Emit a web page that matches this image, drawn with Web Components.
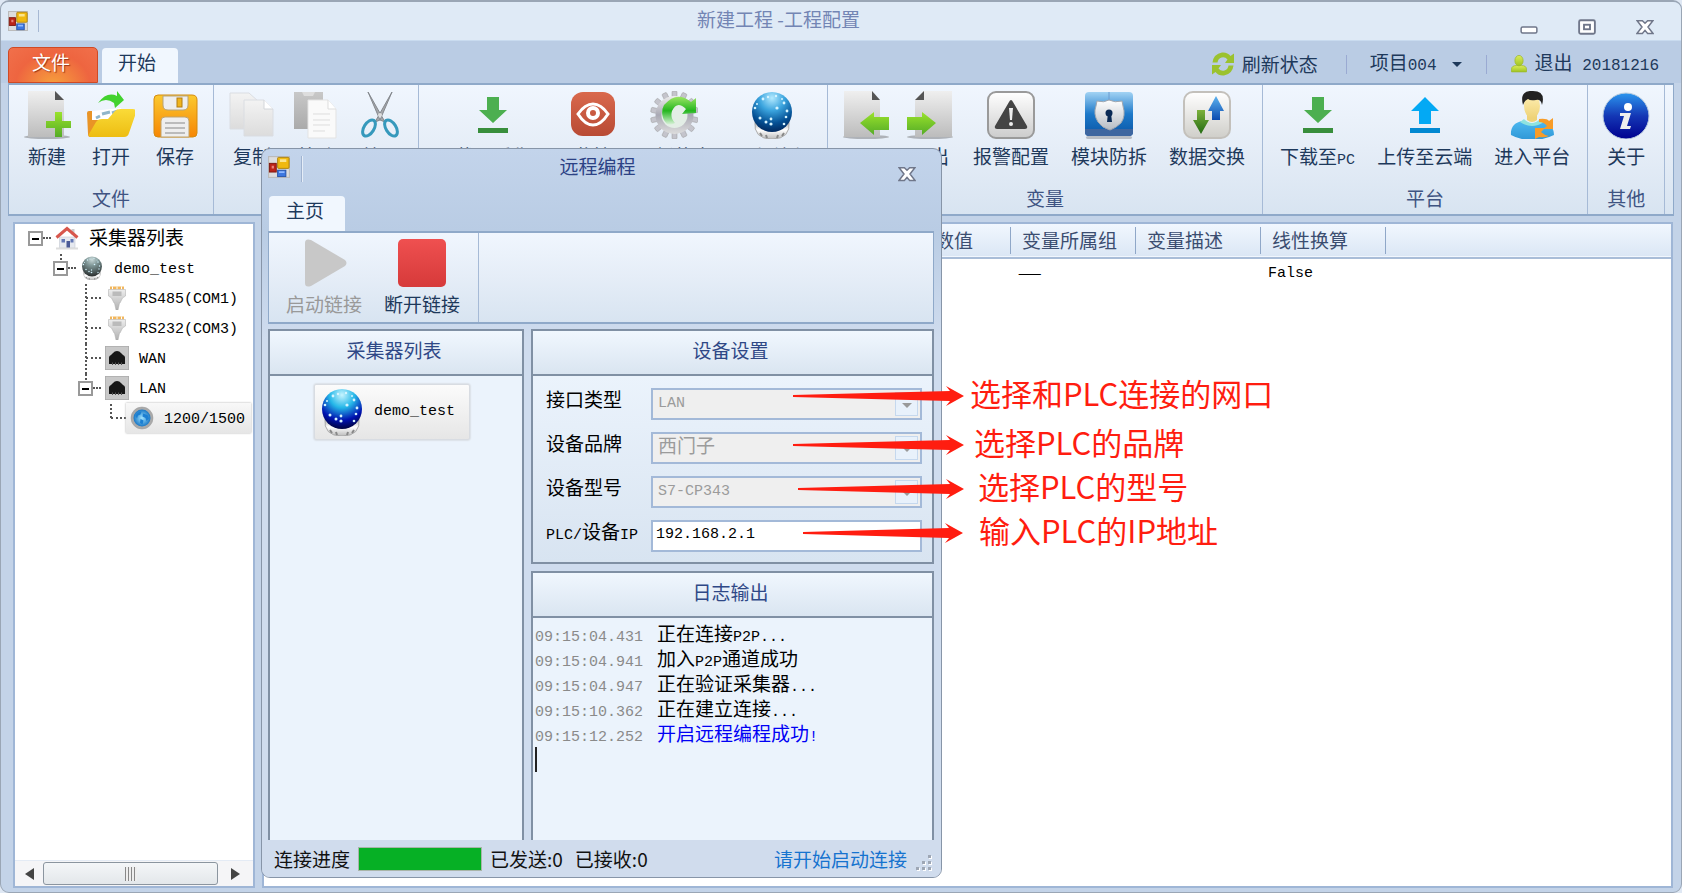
<!DOCTYPE html>
<html lang="zh-CN">
<head>
<meta charset="utf-8">
<title>新建工程 -工程配置</title>
<style>
    html, body { height: 100%; }
    body {
        margin: 0;
        overflow: hidden;
        background: #dfe8f4;
        font: 19px/24px "Noto Sans CJK SC", sans-serif;
        color: #1e395b;
    }
</style>
</head>
<body>
<main-window>
    <tab-bar slot="tabs"></tab-bar>
    <ribbon-panel slot="ribbon">
        <ribbon-group caption="文件">
            <ribbon-button icon="new" label="新建"></ribbon-button>
            <ribbon-button icon="open" label="打开"></ribbon-button>
            <ribbon-button icon="save" label="保存"></ribbon-button>
        </ribbon-group>
        <ribbon-group caption="编辑">
            <ribbon-button icon="copy" label="复制"></ribbon-button>
            <ribbon-button icon="paste" label="粘贴"></ribbon-button>
            <ribbon-button icon="cut" label="剪切"></ribbon-button>
        </ribbon-group>
        <ribbon-group caption="采集器">
            <ribbon-button icon="download" label="下载至采集器"></ribbon-button>
            <ribbon-button icon="eye" label="监控"></ribbon-button>
            <ribbon-button icon="gear" label="更新状态"></ribbon-button>
            <ribbon-button icon="globe" label="远程编程"></ribbon-button>
        </ribbon-group>
        <ribbon-group caption="变量">
            <ribbon-button icon="import" label="导入"></ribbon-button>
            <ribbon-button icon="export" label="导出"></ribbon-button>
            <ribbon-button icon="alarm" label="报警配置"></ribbon-button>
            <ribbon-button icon="shield" label="模块防拆"></ribbon-button>
            <ribbon-button icon="exchange" label="数据交换"></ribbon-button>
        </ribbon-group>
        <ribbon-group caption="平台">
            <ribbon-button icon="download" label="下载至PC"></ribbon-button>
            <ribbon-button icon="upload" label="上传至云端"></ribbon-button>
            <ribbon-button icon="person" label="进入平台"></ribbon-button>
        </ribbon-group>
        <ribbon-group caption="其他">
            <ribbon-button icon="about" label="关于"></ribbon-button>
        </ribbon-group>
    </ribbon-panel>
    <device-tree slot="side">
        <tree-node icon="home" label="采集器列表" open>
            <tree-node icon="device" label="demo_test" open>
                <tree-node icon="serial" label="RS485(COM1)"></tree-node>
                <tree-node icon="serial" label="RS232(COM3)"></tree-node>
                <tree-node icon="port" label="WAN"></tree-node>
                <tree-node icon="port" label="LAN" open>
                    <tree-node icon="disc" label="1200/1500" selected></tree-node>
                </tree-node>
            </tree-node>
        </tree-node>
    </device-tree>
    <variable-table slot="content"></variable-table>
</main-window>

<remote-dialog caption="远程编程">
    <device-list slot="list"></device-list>
    <device-form slot="form"></device-form>
    <log-output slot="log"></log-output>
</remote-dialog>

<hint-arrow length="171" style="left: 793px; top: 372px; gap: 6px">选择和PLC连接的网口</hint-arrow>
<hint-arrow length="171" style="left: 793px; top: 421px; gap: 10px">选择PLC的品牌</hint-arrow>
<hint-arrow length="166" style="left: 798px; top: 465px; gap: 14px">选择PLC的型号</hint-arrow>
<hint-arrow length="160" style="left: 803px; top: 509px; gap: 16px">输入PLC的IP地址</hint-arrow>

<script>
const gradient = (id, ...colors) => `
    <linearGradient id="${id}" x1="0" y1="0" x2="0" y2="1">
        ${colors.map((c, i) => `<stop offset="${i / (colors.length - 1)}" stop-color="${c}"/>`).join('')}
    </linearGradient>`;

const ball = (a, b, c, d) => `
    <defs>
        <radialGradient id="ball" cx=".5" cy=".15" r=".9">
            <stop offset="0" stop-color="${a}"/><stop offset=".35" stop-color="${b}"/>
            <stop offset=".7" stop-color="${c}"/><stop offset="1" stop-color="${d}"/>
        </radialGradient>
        ${gradient('base', '#999', '#fff', '#bbb')}
    </defs>
    <path d="M7 30 Q5 48 24 48 T41 30Z" fill="url(#base)" stroke="#aaa"/>
    <path d="M12 42l2 3M18 44l1 3M30 44l-1 3M36 42l-2 3" stroke="#888" stroke-width="2"/>
    <circle cx="24" cy="21" r="20" fill="url(#ball)"/>
    <g fill="#d5f4ff">
        <circle cx="15" cy="8" r="1.4"/><circle cx="20" cy="6" r="1.2"/><circle cx="28" cy="5" r="1.2"/>
        <circle cx="36" cy="12" r="1.4"/><circle cx="29" cy="17" r="1.6"/><circle cx="39" cy="20" r="1.4"/>
        <circle cx="7" cy="17" r="1.3"/><circle cx="12" cy="27" r="1.5"/><circle cx="18" cy="31" r="1.5"/>
        <circle cx="23" cy="28" r="1.4"/><circle cx="23" cy="33" r="1.6"/><circle cx="38" cy="26" r="1.3"/>
        <circle cx="36" cy="33" r="1.3"/><circle cx="9" cy="13" r="1"/><circle cx="34" cy="8" r="1"/>
    </g>`;

const page = `
    <defs>${gradient('page', '#efefef', '#bcbcbc')}${gradient('green', '#9ae22c', '#55ac27')}</defs>
    <ellipse cx="24" cy="46" rx="23" ry="2" fill="#aeb2b8"/>`;

const gearTeeth = Array.from({ length: 14 }, (v, i) =>
    `<rect x="22" y="0" width="5" height="10" rx="1" transform="rotate(${i * 360 / 14} 24.5 24)"/>`).join('');

const icons = {
    new: `${page}<path d="M5 0h27l9 9v37H5z" fill="url(#page)"/><path d="M32 0v9h9z" fill="#555"/>
        <path d="M32 21h7v9h9v7h-9v9h-7v-9h-9v-7h9z" fill="url(#green)"/>`,
    import: `${page}<path d="M2 0h28l8 9v37H2z" fill="url(#page)"/><path d="M30 0v9h8z" fill="#555"/>
        <path d="M18 32l14-11v5h15v13H32v5z" fill="url(#green)"/>`,
    export: `${page}<path d="M9 9l8-9h29v46H9z" fill="url(#page)"/><path d="M18 0v9h-9z" fill="#555"/>
        <path d="M30 32L16 21v5H1v13h15v5z" fill="url(#green)"/>`,
    open: `<defs>${gradient('fold', '#fadb38', '#edbd12')}</defs>
        <path d="M0 22q0-2 2-2h9v26H3q-2 0-2-3z" fill="#e99426"/>
        <path d="M5 20l29-3 3 12H5z" fill="#fff"/>
        <path d="M9 27l4-2M15 23l8-2M25 22l6-2" stroke="#91b6c9" stroke-width="3"/>
        <path d="M9 31Q11 28 15 28h6l7-8q2-2 5-2h13q4 0 3 4l-7 20q-1 4-5 4H4q-3 0-2-3z" fill="url(#fold)"/>
        <path d="M11 12Q20 0 30 5V0l7 9-9 8-1-5Q19 6 11 12z" fill="#42d22e"/>`,
    save: `<defs>${gradient('disk', '#fbc92e', '#f68605')}</defs>
        <path d="M3 8q0-4 4-4h34q5 0 5 5v33q0 4-4 4H7q-4 0-4-4z" fill="url(#disk)" stroke="#d58b0f"/>
        <path d="M12 5h25v9q0 5-5 5H17q-5 0-5-5z" fill="#eee" stroke="#b7a377"/>
        <rect x="26" y="7" width="5" height="9" fill="#f0b41c" stroke="#b27c11"/>
        <path d="M10 46V30q0-4 4-4h20q4 0 4 4v16z" fill="#eee" stroke="#bfa36d"/>
        <path d="M14 32h20M14 37h20M14 42h20" stroke="#bbb" stroke-width="2"/>`,
    copy: `<defs>${gradient('grey', '#f3f3f3', '#dcdcdc')}</defs>
        <g fill="url(#grey)" stroke="#dadde2"><path d="M2 2h19l9 8v28H2z"/><path d="M16 9h20l9 9v27H16z"/></g>
        <path d="M36 9v9h9" fill="#fff" stroke="#d3d6da"/>`,
    paste: `<defs>${gradient('board', '#c8c8c8', '#aaa')}</defs>
        <path d="M2 1h29v37H2z" fill="url(#board)"/><path d="M10 1h13l-2 4H12z" fill="#ddd"/>
        <path d="M16 9h20l8 9v29H16z" fill="#fafafa" stroke="#e3e3e3"/><path d="M36 9v9h8" fill="#fff" stroke="#ddd"/>
        <path d="M21 23h17M21 29h17M21 34h17M21 40h12" stroke="#ddd"/>`,
    cut: `<path d="M12 1L29 31l-5-2zM36 1L19 31l5-2z" fill="#a4a6aa" stroke="#85898e"/>
        <g fill="none" stroke="#3699bc" stroke-width="3"><ellipse cx="13" cy="37" rx="5" ry="9" transform="rotate(32 13 37)"/>
        <ellipse cx="35" cy="37" rx="5" ry="9" transform="rotate(-32 35 37)"/></g><circle cx="24" cy="24" r="2" fill="#ddd"/>`,
    download: `<path d="M18 6h12v13h8L24 32 10 19h8z" fill="#4caf50"/><path d="M9 37h30v5H9z" fill="#388e3c"/>`,
    upload: `<path d="M18 33h12V20h8L24 6 10 20h8z" fill="#03a9f4"/><path d="M9 37h30v5H9z" fill="#0288d1"/>`,
    eye: `<defs>${gradient('red', '#d9694d', '#b84a34')}</defs><rect x="2" y="1" width="44" height="44" rx="12" fill="url(#red)"/>
        <path d="M9 23Q16 13 24 13T39 23Q32 34 24 34T9 23z" fill="none" stroke="#fff" stroke-width="3"/>
        <circle cx="24" cy="22" r="5" fill="none" stroke="#fff" stroke-width="4"/>`,
    gear: `<defs>${gradient('metal', '#eee', '#a9a9b4', '#ddd')}${gradient('arrow', '#9be564', '#24b61e', '#ddf3de')}</defs>
        <g fill="#c4c4cc" stroke="#999" stroke-width=".5">${gearTeeth}</g>
        <circle cx="24.5" cy="24" r="19" fill="url(#metal)"/><circle cx="24.5" cy="24" r="13" fill="#e3eee6"/>
        <path d="M17 33A16 16 0 0 1 14 14Q27-1 41 11l5-4v15l-14 1 4-5Q27 9 22 20q-2 7 3 12-4 3-8 1z" fill="url(#arrow)"/>`,
    globe: ball('#b3eaff', '#3ba4de', '#045094', '#012153'),
    ball: ball('#c6f4ff', '#25b7e8', '#0012b0', '#000026'),
    device: ball('#c8d8d8', '#7e9595', '#4c5a5a', '#222'),
    alarm: `<defs>${gradient('tile', '#fff', '#ccc')}</defs><rect x="1" y="1" width="46" height="46" rx="8" fill="url(#tile)" stroke="#9a9a9a" stroke-width="2"/>
        <path d="M24 9q1 0 2 2l14 24q1 3-2 3H10q-3 0-2-3L22 11q1-2 2-2z" fill="#444"/>
        <path d="M22 17h4l-1 12h-2z" fill="#eee"/><circle cx="24" cy="33" r="2" fill="#eee"/>`,
    shield: `<defs>${gradient('blue', '#a2d3f4', '#1d79c9', '#0a56a6')}${gradient('plate', '#fff', '#b5bcc4')}</defs>
        <rect x="1" y="45" width="46" height="3" rx="2" fill="#b8bdc5"/>
        <rect x="0" y="1" width="48" height="44" rx="4" fill="url(#blue)"/><path d="M0 38h48v3q0 4-4 4H4q-4 0-4-4z" fill="#3e66a0"/>
        <path d="M24 1v8" stroke="#6a9bd0"/>
        <path d="M12 10q7 2 12-1 6 3 13 1l1 5q3 10-2 17-5 5-11 7-8-2-12-8-5-8-2-16z" fill="url(#plate)" stroke="#a2a8b0"/>
        <circle cx="24" cy="22" r="3.5" fill="#0a2a55"/><path d="M23 22h3l1 9h-5z" fill="#0a2a55"/>`,
    exchange: `<defs>${gradient('tile', '#fff', '#cfcec9')}${gradient('up', '#5db3ef', '#0b4bb0')}${gradient('down', '#7db13d', '#236b12')}</defs>
        <rect x="1" y="1" width="46" height="46" rx="9" fill="url(#tile)" stroke="#c3c0bb" stroke-width="2"/>
        <path d="M33 5l8 15h-4v9h-8v-9h-4z" fill="url(#up)"/><path d="M18 43l8-14h-4V19h-8v10h-4z" fill="url(#down)"/>`,
    person: `<defs>${gradient('skin', '#fff0b5', '#eed277')}${gradient('shirt', '#4db8f0', '#2f97d6')}</defs>
        <path d="M3 44q-1-12 12-14l9 3 9-3q13 3 13 14-10 5-22 5T3 44z" fill="url(#shirt)"/>
        <path d="M16 28q8 8 16 0l4 3q-12 8-24 0z" fill="#8fe3df"/>
        <path d="M19 22h10v7q-5 4-10 0z" fill="#eed277"/><ellipse cx="24" cy="15" rx="8" ry="12" fill="url(#skin)"/>
        <path d="M15 14Q11-1 25 0q13 0 9 14-1-6-6-5-6 1-8-1-4 2-5 6z" fill="#222"/>
        <path d="M31 28q8-1 10 2l4-3v11H35l4-3q-3-4-8-4zM41 45q-5 2-10 1l-4 2V37h10l-4 4q3 3 8 4z" fill="#f79c28"/>`,
    about: `<defs>${gradient('info', '#2b96ee', '#1437b5', '#00008f')}</defs><circle cx="24" cy="25" r="23" fill="url(#info)" stroke="#bcd"/>
        <circle cx="26" cy="16" r="4" fill="#fff"/><path d="M18 22h11l-4 13h4l-1 3H18l4-13h-4z" fill="#eee"/>`,
    play: `<path d="M5 4q0-5 6-3l34 20q3 3 0 6L11 47q-6 2-6-3z" fill="#c8c8c8"/>`,
    stop: `<defs>${gradient('stop', '#ef5050', '#d63a3a')}</defs><rect width="48" height="48" rx="5" fill="url(#stop)"/>`,
    home: `<path d="M9 22h31v22H9z" fill="#e6e9ef" stroke="#b9bfc9"/><path d="M33 6h6v12h-6z" fill="#ccc"/>
        <path d="M3 23L24 5l21 18" fill="none" stroke="#d8574d" stroke-width="6"/>
        <path d="M13 26h7v7h-7zM31 26h6v7h-6z" fill="#6478b5"/><path d="M23 30h7v14h-7z" fill="#4a5a96"/><path d="M2 45h44" stroke="#ddd" stroke-width="4"/>`,
    serial: `<defs>${gradient('plug', '#eee', '#b0b0b0')}</defs><path d="M10 1h28v6H10z" fill="#f2b65b"/><path d="M15 1v6M24 1v6M33 1v6" stroke="#fff" stroke-width="2"/>
        <path d="M7 7h34v13l-6 4-5 10h-1l-3 14h-4l-3-14h-1l-5-10-6-4z" fill="url(#plug)" stroke="#aaa"/><path d="M15 11h18v9H15z" fill="#bbb"/>`,
    port: `<rect width="48" height="48" fill="#c8c8c8" stroke="#aaa" stroke-width="3"/><path d="M8 36V23q0-4 4-5l4-4q3-4 8-4t8 4l4 4q4 1 4 5v13z" fill="#161616"/>
        <path d="M15 33v5M21 33v5M27 33v5M33 33v5" stroke="#555" stroke-width="2"/>`,
    disc: `<defs><radialGradient id="sea"><stop offset="0" stop-color="#9fe3ff"/><stop offset="1" stop-color="#1877c6"/></radialGradient></defs>
        <circle cx="24" cy="24" r="22" fill="#aaa" stroke="#999"/><circle cx="24" cy="24" r="17" fill="url(#sea)"/>
        <path d="M11 20q3-9 12-9l-2 6-5 2-2 6zM26 15l9 3 3 7-5 5-2-6-6-3z" fill="#1c7fd2"/><path d="M21 26l6 3-2 8-5-3z" fill="#1c7fd2"/>`,
    app: `<rect x="1" y="1" width="46" height="46" fill="#ddd" stroke="#bbb" stroke-width="3"/>
        <rect x="21" y="3" width="25" height="24" rx="2" fill="#f0b90f" stroke="#a97e0b" stroke-width="2"/><path d="M26 7h14v6H26z" fill="#fbe58c"/>
        <rect x="3" y="16" width="15" height="19" fill="#bb2418" stroke="#7b150d" stroke-width="2"/><path d="M8 21h5v6H8z" fill="#e98378"/>
        <rect x="21" y="31" width="18" height="14" fill="#3c77e0" stroke="#2350a5" stroke-width="2"/><path d="M24 33h12v4H24z" fill="#8fb8ff"/>`,
    refresh: `<g fill="#9bc22f"><path d="M3 21Q5 4 22 1q11-1 17 7l7-5v19H28l5-7q-5-6-12-4-7 2-8 10z"/>
        <path d="M45 27q-2 17-19 20-11 1-17-7l-7 5V26h18l-5 7q5 6 12 4 7-2 8-10z"/></g>`,
    user: `<defs>${gradient('lime', '#dcec5a', '#9fc423')}</defs><g fill="url(#lime)" stroke="#9db82f" stroke-width="2">
        <path d="M4 45V38q0-10 14-10h12q14 0 14 10v7z"/><ellipse cx="24" cy="15" rx="11" ry="14"/></g>`,
    min: `<rect x="3" y="24" width="42" height="16" rx="4" fill="#fff" stroke="#70778a" stroke-width="4"/>`,
    max: `<rect x="3" y="6" width="42" height="36" rx="4" fill="#fff" stroke="#70778a" stroke-width="5"/><rect x="16" y="18" width="16" height="12" fill="#fff" stroke="#70778a" stroke-width="5"/>`,
    close: `<path d="M3 7h14l7 7 7-7h14L32 24l13 17H31l-7-8-7 8H3l13-17z" fill="#fff" stroke="#70778a" stroke-width="4"/>`
};

// Latin letters and digits are set in the narrow terminal face, half the width of a Han character
const mixed = text => text.replace(/[\x20-\x7e]+/g, run => `<span class="latin">${run}</span>`);

const base = `
    * { box-sizing: border-box; }
    button { font: inherit; color: inherit; background: none; border: 0; padding: 0; margin: 0; }
    .latin { font-family: "Liberation Mono", monospace; font-size: 15px; white-space: pre; }
`;

class BaseElement extends HTMLElement {
    constructor() {
        super();
        this.attachShadow({ mode: 'open' });
    }

    connectedCallback() {
        this.shadowRoot.innerHTML = `<style>${base}${this.styles()}</style>${this.markup()}`;
    }
}

class UiIcon extends BaseElement {
    styles() {
        return `:host { display: block; flex: none; width: 48px; height: 48px; } svg { display: block; width: 100%; height: 100%; }`;
    }
    markup() {
        return `<svg viewBox="0 0 48 48" aria-hidden="true">${icons[this.getAttribute('name')]}</svg>`;
    }
}

class MainWindow extends BaseElement {
    styles() {
        return `
        :host {
            display: flex; flex-direction: column; box-sizing: border-box; height: 100vh;
            border: 1px solid #9aa6b5; border-top-width: 2px; border-radius: 9px; overflow: hidden;
            background: #c3d3e8;
        }
        header { display: flex; align-items: center; height: 39px; background: #dfeaf6; border-bottom: 1px solid #c9dbef; }
        .left { display: flex; align-items: center; gap: 10px; width: 48px; padding-left: 7px; }
        .left ui-icon { width: 20px; height: 20px; }
        .left i { width: 1px; height: 22px; background: #a6b8d3; }
        h1 { flex: 1; margin: 0; font-size: 19px; line-height: 24px; font-weight: 400; text-align: center; color: #7385b4; padding: 0 12px 4px 0; }
        .right { display: flex; gap: 40px; padding: 12px 27px 0 0; }
        .right ui-icon { width: 18px; height: 18px; }
        main { flex: 1; display: grid; grid-template-columns: 242px 1fr; gap: 7px; min-height: 0; padding: 6px 8px 4px 12px; }
        `;
    }
    markup() {
        return `
        <header>
            <div class="left"><ui-icon name="app"></ui-icon><i></i></div>
            <h1>新建工程 -工程配置</h1>
            <div class="right">
                <button aria-label="最小化"><ui-icon name="min"></ui-icon></button>
                <button aria-label="最大化"><ui-icon name="max"></ui-icon></button>
                <button aria-label="关闭"><ui-icon name="close"></ui-icon></button>
            </div>
        </header>
        <slot name="tabs"></slot>
        <slot name="ribbon"></slot>
        <main><slot name="side"></slot><slot name="content"></slot></main>`;
    }
}

class TabBar extends BaseElement {
    styles() {
        return `
        :host { display: flex; align-items: flex-end; height: 42px; padding: 0 22px 0 7px; box-sizing: border-box; background: #bacce4; }
        .file {
            width: 90px; height: 36px; margin-right: 4px; border: 1px solid #cf4a25; border-radius: 5px 5px 0 0;
            background: radial-gradient(ellipse at 50% 110%, #f7a13c, #ee6540 60%, #f1704b); color: #fff;
            text-shadow: 1px 1px 1px #9c3414; padding: 0 4px 7px 0;
        }
        .tab { width: 76px; height: 35px; border-radius: 4px 4px 0 0; background: #f1f7fe; padding: 0 6px 7px 0; }
        .tools { display: flex; align-items: center; height: 38px; margin-left: auto; }
        .tools button { display: flex; align-items: center; gap: 7px; }
        .tools ui-icon { width: 24px; height: 24px; }
        .tools ui-icon[name=user] { width: 18px; height: 20px; }
        .tools i { width: 1px; height: 19px; margin: 0 23px 0 28px; background: #9aaad2; }
        .tools .project { gap: 15px; }
        .project::after { content: ""; border: 5px solid transparent; border-top-color: #1e395b; border-bottom: 0; }
        .tools i.last { margin-left: 24px; }
        .tools .latin { font-size: 16px; }
        `;
    }
    markup() {
        return `
        <button class="file">文件</button>
        <button class="tab">开始</button>
        <div class="tools">
            <button><ui-icon name="refresh"></ui-icon>刷新状态</button><i></i>
            <button class="project"><span>${mixed('项目004')}</span></button><i class="last"></i>
            <button><ui-icon name="user"></ui-icon><span>${mixed('退出 20181216')}</span></button>
        </div>`;
    }
}

class RibbonPanel extends BaseElement {
    styles() {
        return `:host {
            display: flex; flex: none; height: 133px; margin: 0 7px; box-sizing: border-box;
            border: 2px solid #8fa9c9; border-width: 2px 1px 2px 1px;
            background: linear-gradient(#f0f6fe, #e5edf7 50%, #d8e4f1);
        }`;
    }
    markup() { return '<slot></slot>'; }
}

class RibbonGroup extends BaseElement {
    styles() {
        return `
        :host { display: flex; flex-direction: column; justify-content: space-between; padding: 6px 6px 4px; border-right: 1px solid #a6bad6; }
        .items { display: flex; }
        .caption { text-align: center; color: #3f5482; }
        `;
    }
    markup() {
        return `<div class="items"><slot></slot></div><div class="caption">${this.getAttribute('caption')}</div>`;
    }
}

class RibbonButton extends BaseElement {
    styles() {
        return `
        button { display: flex; flex-direction: column; align-items: center; gap: 5px; min-width: 64px; white-space: nowrap; }
        span.label { padding: 0 11px; }
        :host([disabled]) button { color: #999; }
        `;
    }
    markup() {
        const off = this.hasAttribute('disabled') ? 'disabled' : '';
        return `<button ${off}><ui-icon name="${this.getAttribute('icon')}"></ui-icon><span class="label">${mixed(this.getAttribute('label'))}</span></button>`;
    }
}

class DeviceTree extends BaseElement {
    styles() {
        return `
        :host { display: flex; flex-direction: column; border: 2px solid #9fb6d6; background: #fff; color: #000; overflow: hidden; }
        .nodes { flex: 1; padding: 0 0 0 13px; }
        .bar { display: flex; align-items: center; gap: 9px; height: 26px; padding: 0 13px 0 10px; background: #f5f5f7; border-top: 1px solid #e4ebf5; }
        .bar button { border: 6px solid transparent; width: 9px; height: 12px; }
        .bar .prev { border-right: 9px solid #444; border-left: 0; }
        .bar .next { border-left: 9px solid #444; border-right: 0; margin-left: 4px; }
        .thumb {
            flex: 1; height: 23px; border: 1px solid #8b959f; border-radius: 3px;
            background: repeating-linear-gradient(90deg, #888 0 1px, #eee 1px 3px) center / 12px 14px no-repeat, linear-gradient(#f4f6f8, #e3e7ea);
        }
        `;
    }
    markup() {
        return `
        <div class="nodes" role="tree"><slot></slot></div>
        <div class="bar"><button class="prev" aria-label="向左"></button><div class="thumb"></div><button class="next" aria-label="向右"></button></div>`;
    }
}

class TreeNode extends BaseElement {
    styles() {
        return `
        :host { display: block; position: relative; }
        :host::before { content: ""; position: absolute; left: 7px; top: 0; height: 100%; border-left: 2px dotted #555; }
        :host(:last-child)::before { height: 14px; }
        :host([icon=home])::before { display: none; }
        .row { display: flex; align-items: center; height: 30px; padding-bottom: 2px; white-space: nowrap; }
        .fold { position: relative; width: 15px; height: 15px; background: #fff; border: 2px solid #999; }
        .fold::after { content: ""; position: absolute; left: 2px; top: 5px; width: 7px; height: 2px; background: #000; }
        .gap { width: 15px; border-top: 2px dotted #555; margin-left: 8px; }
        .fold + .gap { width: 8px; margin-left: 0; }
        .item { display: flex; align-items: center; gap: 10px; height: 30px; padding: 0 6px 0 4px; }
        .item ui-icon { width: 24px; height: 24px; }
        .item span { padding-bottom: 2px; }
        .children { padding-left: 25px; }
        :host([selected]) .item { background: linear-gradient(#f8f8f8, #e6e6e6); box-shadow: 0 0 2px #aaa; }
        `;
    }
    markup() {
        const open = this.hasAttribute('open');
        return `
        <div class="row">
            ${open ? '<button class="fold" aria-label="折叠"></button>' : ''}<span class="gap"></span>
            <div class="item"><ui-icon name="${this.getAttribute('icon')}"></ui-icon><span>${mixed(this.getAttribute('label'))}</span></div>
        </div>
        <div class="children"><slot></slot></div>`;
    }
}

class VariableTable extends BaseElement {
    styles() {
        return `
        :host { display: block; border: 2px solid #9fb6d6; background: #fff; }
        table { width: 100%; border-collapse: collapse; table-layout: fixed; }
        col { width: 125px; }
        col.lead { width: 622px; }
        col.rest { width: auto; }
        thead { background: linear-gradient(#f1f7fe, #dbe7f5); border-bottom: 2px solid #a9bdd8; }
        th { height: 34px; padding: 0 0 2px 11px; font-weight: 400; text-align: left; color: #3b4d70;
            background: linear-gradient(#8fa7c8, #8fa7c8) right center / 1px 27px no-repeat; }
        th:first-child, th:last-child { background: none; }
        td { height: 26px; padding: 0 0 0 7px; line-height: 20px; color: #000; }
        td.dash { font-size: 14px; }
        `;
    }
    markup() {
        return `
        <table>
            <colgroup><col class="lead"><col><col><col><col><col class="rest"></colgroup>
            <thead><tr><th></th><th>变量数值</th><th>变量所属组</th><th>变量描述</th><th>线性换算</th><th></th></tr></thead>
            <tbody><tr><td></td><td></td><td class="dash">——</td><td></td><td>${mixed('False')}</td><td></td></tr></tbody>
        </table>`;
    }
}

class RemoteDialog extends BaseElement {
    styles() {
        return `
        :host {
            position: absolute; left: 261px; top: 148px; width: 681px; height: 730px; box-sizing: border-box;
            display: flex; flex-direction: column; padding: 0 7px 0 6px; overflow: hidden;
            border: 1px solid #8795a8; border-radius: 9px;
            background: linear-gradient(#c3d4eb, #b9cce4 82px, #cfdcee 190px);
        }
        header { display: flex; align-items: flex-start; height: 47px; padding: 7px 0 0; }
        header ui-icon[name=app] { width: 22px; height: 22px; }
        header i { width: 2px; height: 26px; margin-left: 11px; background: #a0b3d0; border-right: 1px solid #e5edf7; }
        h2 { flex: 1; margin: 0; font-size: 19px; line-height: 20px; font-weight: 400; text-align: center; color: #2c4285; padding-right: 6px; }
        .close { margin: 9px 18px 0 0; }
        .close ui-icon { width: 18px; height: 18px; }
        .tab { width: 76px; height: 35px; margin-left: 1px; border-radius: 4px 4px 0 0; background: #f1f7fe; padding: 0 4px 7px 0; align-self: flex-start; }
        .ribbon { display: flex; height: 93px; border: 1px solid #8fa9c9; border-top: 2px solid #8fa9c9; border-bottom-width: 2px; background: linear-gradient(#f0f6fe, #e5edf7 50%, #d8e4f1); }
        .group { display: flex; padding: 6px 7px 0 6px; border-right: 1px solid #a6bad6; }
        .body { flex: 1; display: grid; grid-template-columns: 256px 1fr; gap: 7px; min-height: 0; padding-top: 5px; }
        .side { display: grid; grid-template-rows: auto 1fr; gap: 7px; }
        footer { display: flex; align-items: center; height: 37px; margin: 0 -7px 0 -6px; padding: 0 8px 0 12px; background: #d0dced; color: #111; }
        progress { width: 124px; height: 24px; margin: 0 8px; appearance: none; border: 1px solid #a9b5a9; }
        progress::-webkit-progress-bar { background: #e6e6e6; }
        progress::-webkit-progress-value { background: #06b025; }
        .received { margin: 0 auto 0 12px; }
        a { color: #1673cf; text-decoration: none; }
        .grip { width: 18px; height: 18px; margin: 8px 0 0 8px; }
        `;
    }
    markup() {
        const dots = [[13, 1], [13, 7], [7, 7], [13, 13], [7, 13], [1, 13]]
            .map(([x, y]) => `<rect x="${x + 1}" y="${y + 1}" width="3" height="3" fill="#fff"/><rect x="${x}" y="${y}" width="3" height="3" fill="#9ea7b5"/>`).join('');
        return `
        <header><ui-icon name="app"></ui-icon><i></i><h2>${this.getAttribute('caption')}</h2>
            <button class="close" aria-label="关闭"><ui-icon name="close"></ui-icon></button></header>
        <button class="tab">主页</button>
        <div class="ribbon"><div class="group">
            <ribbon-button icon="play" label="启动链接" disabled></ribbon-button>
            <ribbon-button icon="stop" label="断开链接"></ribbon-button>
        </div></div>
        <div class="body">
            <slot name="list"></slot>
            <div class="side"><slot name="form"></slot><slot name="log"></slot></div>
        </div>
        <footer>
            <label for="progress">连接进度</label><progress id="progress" max="100" value="100"></progress>
            <span>已发送:0</span><span class="received">已接收:0</span>
            <a href="#start">请开始启动连接</a>
            <svg class="grip" viewBox="0 0 18 18" aria-hidden="true">${dots}</svg>
        </footer>`;
    }
}

class TitledPanel extends BaseElement {
    styles() {
        return `
        :host { display: flex; flex-direction: column; flex: 1; box-sizing: border-box; border: 2px solid #8090a4; }
        h3 { margin: 0; padding: 7px 4px 12px 0; font-size: 19px; line-height: 24px; font-weight: 400; text-align: center; color: #2f4886;
            background: linear-gradient(#f0f7fe, #dae5f1); border-bottom: 2px solid #8090a4; }
        .body { flex: 1; background: var(--panel-body, #ebf3fc); color: #000; }
        `;
    }
    markup() {
        return `<h3>${this.getAttribute('caption')}</h3><div class="body"><slot></slot></div>`;
    }
}

class DeviceList extends BaseElement {
    styles() {
        return `
        :host { display: flex; }
        titled-panel { border-bottom: 0; }
        .device { display: flex; align-items: center; gap: 8px; width: 156px; height: 56px; margin: 8px auto 0 44px; padding-left: 3px;
            background: linear-gradient(#fbfbfb, #e6e6e6); border: 1px solid #d8dce2; border-radius: 2px; box-shadow: 0 0 2px #bbb; }
        `;
    }
    markup() {
        return `<titled-panel caption="采集器列表"><button class="device"><ui-icon name="ball"></ui-icon>${mixed('demo_test')}</button></titled-panel>`;
    }
}

class DeviceForm extends BaseElement {
    styles() {
        return `
        :host { display: flex; --panel-body: linear-gradient(#ebf3fc, #d8e4f1); }
        .grid { display: grid; grid-template-columns: 93px 1fr; gap: 12px; padding: 12px 10px 10px 13px; white-space: nowrap; }
        label { line-height: 22px; }
        .field { position: relative; display: flex; height: 32px; }
        select, input { flex: 1; width: 100%; margin: 0; border: 2px solid #a3b9d8; border-radius: 0; appearance: none; outline: 0;
            font: 15px/24px "Liberation Mono", "Noto Sans CJK SC", monospace; }
        select { padding: 0 5px; background: #efefef; color: #9b9b9b; opacity: 1; }
        select.han { font-size: 19px; }
        input { padding: 0 3px 3px; background: #fff; color: #000; }
        .drop { position: absolute; right: 4px; top: 4px; width: 23px; height: 24px; background: #e8f1fb; border: 1px solid #c5d8ee; }
        .drop::after { content: ""; position: absolute; left: 6px; top: 10px; border: 5px solid transparent; border-top-color: #999; border-bottom: 0; }
        `;
    }
    markup() {
        const pick = (id, label, value, cls = '') => `
            <label for="${id}">${label}</label>
            <div class="field"><select id="${id}" class="${cls}" disabled><option>${value}</option></select><span class="drop"></span></div>`;
        return `
        <titled-panel caption="设备设置"><div class="grid">
            ${pick('type', '接口类型', 'LAN')}
            ${pick('brand', '设备品牌', '西门子', 'han')}
            ${pick('model', '设备型号', 'S7-CP343')}
            <label for="ip">${mixed('PLC/设备IP')}</label><div class="field"><input id="ip" value="192.168.2.1"></div>
        </div></titled-panel>`;
    }
}

class LogOutput extends BaseElement {
    styles() {
        return `
        :host { display: flex; min-height: 0; }
        titled-panel { border-bottom: 0; }
        .log { padding: 2px 2px; }
        .line { display: grid; grid-template-columns: 122px 1fr; height: 25px; line-height: 25px; align-items: baseline; }
        time { color: #8a8a8a; }
        .done { color: #0000f5; }
        .caret { width: 2px; height: 25px; margin-top: 2px; background: #222; }
        `;
    }
    markup() {
        const lines = [
            ['09:15:04.431', '正在连接P2P...'],
            ['09:15:04.941', '加入P2P通道成功'],
            ['09:15:04.947', '正在验证采集器...'],
            ['09:15:10.362', '正在建立连接...'],
            ['09:15:12.252', '开启远程编程成功!', 'done']
        ];
        return `
        <titled-panel caption="日志输出"><div class="log">
            ${lines.map(([t, text, cls = '']) => `<div class="line"><time>${mixed(t)}</time><span class="${cls}">${mixed(text)}</span></div>`).join('')}
            <div class="caret"></div>
        </div></titled-panel>`;
    }
}

class HintArrow extends BaseElement {
    styles() {
        return `
        :host { position: absolute; display: flex; align-items: center; color: #ff1d10; font-size: 31px; line-height: 42px; white-space: nowrap; }
        svg { display: block; flex: none; }
        span { padding-bottom: 6px; }
        `;
    }
    markup() {
        const w = Number(this.getAttribute('length'));
        return `
        <svg width="${w}" height="20" viewBox="0 0 ${w} 20" aria-hidden="true">
            <path d="M0 9L${w - 14} 5L${w - 18} 0L${w} 10L${w - 18} 20L${w - 14} 15L0 11z" fill="#ff1d10"/>
        </svg><span><slot></slot></span>`;
    }
}

customElements.define('ui-icon', UiIcon);
customElements.define('main-window', MainWindow);
customElements.define('tab-bar', TabBar);
customElements.define('ribbon-panel', RibbonPanel);
customElements.define('ribbon-group', RibbonGroup);
customElements.define('ribbon-button', RibbonButton);
customElements.define('device-tree', DeviceTree);
customElements.define('tree-node', TreeNode);
customElements.define('variable-table', VariableTable);
customElements.define('titled-panel', TitledPanel);
customElements.define('remote-dialog', RemoteDialog);
customElements.define('device-list', DeviceList);
customElements.define('device-form', DeviceForm);
customElements.define('log-output', LogOutput);
customElements.define('hint-arrow', HintArrow);
</script>
</body>
</html>
